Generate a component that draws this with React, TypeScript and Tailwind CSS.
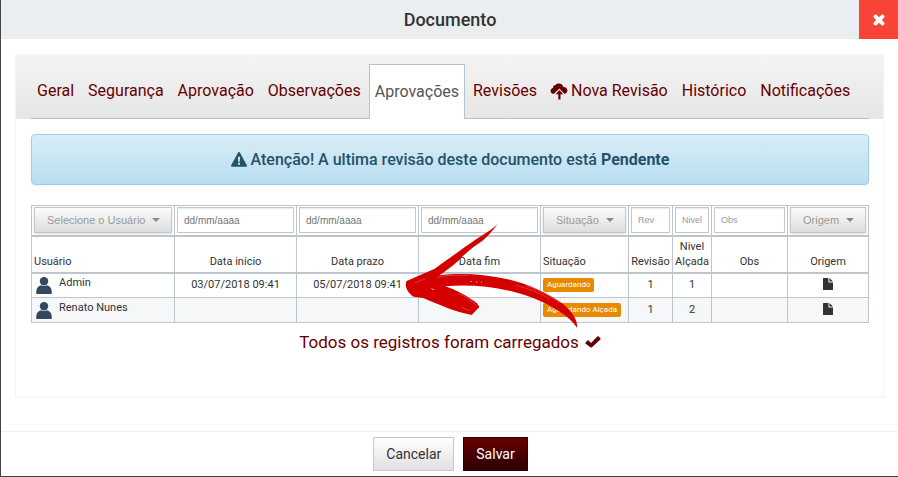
import React from "react";

const font = "font-['Roboto','Liberation_Sans',sans-serif]";

const tabs = [
  { label: "Geral" },
  { label: "Segurança" },
  { label: "Aprovação" },
  { label: "Observações" },
  { label: "Aprovações", active: true },
  { label: "Revisões" },
  { label: "Nova Revisão", upload: true },
  { label: "Histórico" },
  { label: "Notificações" },
];

const rows = [
  { user: "Admin", start: "03/07/2018 09:41", due: "05/07/2018 09:41", status: "Aguardando", rev: "1", level: "1" },
  { user: "Renato Nunes", start: "", due: "", status: "Aguardando Alçada", rev: "1", level: "2" },
];

function CloudUpload() {
  return (
    <svg viewBox="0 0 18 17" className="-ml-px h-[17px] w-[18px]" fill="currentColor" aria-hidden="true">
      <path d="M4 10.800 C1.800 10.800 .6 9.500 .6 7.900 C.6 6.300 1.700 5.200 3.100 5 C2.800 3.300 3.800 2.200 5.200 2.300 C6 1 7.300 .4 8.900 .4 C11.400 .4 13 1.900 13.300 4 C15.600 3.900 17.400 5.400 17.400 7.500 C17.400 9.400 16.100 10.800 14.300 10.800 L9.400 5.400 Z" />
      <path d="M9.400 6.900 L13.200 11.200 H10.500 V16.600 H8.300 V11.200 H5.600 Z" />
    </svg>
  );
}

function Warning() {
  return (
    <svg viewBox="0 0 16 15" className="h-[15px] w-4" fill="currentColor" aria-hidden="true">
      <path fillRule="evenodd" d="M8 0 C8.4 0 8.7 .2 8.9 .5 L15.8 13.2 C16.2 14 15.8 14.8 15 14.8 H1 C.2 14.8 -.2 14 .2 13.2 L7.1 .5 C7.3 .2 7.6 0 8 0 Z M6.9 4.8 L7.2 9.8 H8.8 L9.1 4.8 Z M7 10.8 V12.8 H9 V10.8 Z" />
    </svg>
  );
}

function Cross() {
  return (
    <svg viewBox="0 0 12 12" className="h-3 w-3" stroke="currentColor" strokeWidth="4" strokeLinecap="round" aria-hidden="true">
      <path d="M2.6 2.6 L9.4 9.4 M9.4 2.6 L2.6 9.4" />
    </svg>
  );
}

function Check() {
  return (
    <svg viewBox="0 0 16 12" className="h-3 w-4" fill="currentColor" aria-hidden="true">
      <path d="M.5 6.8 L2.4 4.6 Q3 4 3.7 4.6 L6 6.9 L12.3 .6 Q13 0 13.7 .6 L15.4 2.3 Q15.9 2.9 15.3 3.5 L7 11.3 Q6.2 11.9 5.4 11.3 L.6 7.8 Q.1 7.3 .5 6.8 Z" />
    </svg>
  );
}

function Person() {
  return (
    <svg viewBox="0 0 16 17" className="h-[17px] w-4 shrink-0" fill="#34495e" aria-hidden="true">
      <circle cx="8" cy="4.3" r="4.2" />
      <path d="M.3 17 V14 C.3 11 2.5 8.8 5 8.2 Q8 10 11 8.2 C13.500 8.8 15.700 11 15.700 14 V17 Z" />
    </svg>
  );
}

function FileIcon() {
  return (
    <svg viewBox="0 0 10 12" className="block h-3 w-[10px]" fill="#333" aria-hidden="true">
      <path d="M0 .6 Q0 0 .6 0 H5.400 V4.400 H10 V11.400 Q10 12 9.400 12 H.6 Q0 12 0 11.400 Z M6.400 0 L10 3.500 H6.400 Z" />
    </svg>
  );
}

function FilterSelect({ label }: { label: string }) {
  return (
    <div className="grid items-center">
      <select
        aria-label={label}
        className="col-start-1 row-start-1 h-[26px] w-full appearance-none border border-[#c6c6c6] bg-linear-to-b from-[#fcfcfc] to-[#dedede] pl-3 font-['Liberation_Sans',Arial,sans-serif] text-[11px] text-[#999] shadow-sm"
      >
        <option>{label}</option>
      </select>
      <svg viewBox="0 0 8 4" className="pointer-events-none col-start-1 row-start-1 mr-3 h-1 w-2 justify-self-end" fill="#888" aria-hidden="true">
        <path d="M0 0 H8 L4 4 Z" />
      </svg>
    </div>
  );
}

function FilterInput({ label, name, tone }: { label: string; name: string; tone: string }) {
  return (
    <input
      type="text"
      aria-label={name}
      placeholder={label}
      className={`block h-[26px] w-full border border-[#c6c6c6] bg-white px-[6px] font-['Liberation_Sans',Arial,sans-serif] shadow-[inset_0_1px_1px_rgba(0,0,0,0.08)] ${tone}`}
    />
  );
}

function Arrow() {
  return (
    <svg viewBox="72 36 528 321" className="pointer-events-none absolute top-[17px] left-[373px] h-[107px] w-44" aria-hidden="true">
      <path
        fill="#d40000"
        d="M353 41 C335 60 310 73 285 90 C250 114 212 142 164 176 L80 213 C73 224 80 248 101 260 L130 264 C170 281 210 299 247 308 L275 315 L298 291 L291 280 C266 261 230 240 195 229 C260 223 330 228 400 245 C460 259 510 284 548 311 Q576 330 591 353 C594 328 574 303 548 281 C500 248 440 220 375 206 C310 192 240 188 178 196 C205 177 221 165 238 149 C254 133 270 117 295 101 C318 86 335 66 353 41 Z"
      />
      <g fill="none" stroke="#f0a0a0" strokeWidth="1.500" strokeLinecap="round" opacity="0.7">
        <path d="M172 202 C205 196 230 194 262 197" />
        <path d="M408 226 C440 234 475 247 508 266" />
        <path d="M440 228 C480 242 510 258 538 278" />
        <path d="M236 251 C258 261 276 272 288 285" />
        <path d="M244 291 L268 302 M104 219 L135 207" />
      </g>
      <path d="M152 233 L165 240 L158 240 Z M272 213 h4 v3 h-4 Z M288 214 h4 v3 h-4 Z M303 215 h3 v3 h-3 Z" fill="#f3b0b0" />
    </svg>
  );
}

const cell = "border border-[#bdc6ce] px-[2px]";
const bodyCell = "border border-[#bdc6ce] px-[2px] pb-[2px]";
const dateTone = "text-[10px] placeholder:text-[#757575]";
const textTone = "text-[9px] placeholder:text-[#999]";

export default function App() {
  return (
    <div className={`flex min-h-screen flex-col border-b border-l border-[#444] bg-white text-[#333] ${font}`}>
      <header className="flex h-[39px] items-stretch bg-[#eaeef1]">
        <h1 className="flex flex-1 items-center justify-center pl-10 text-lg font-medium">Documento</h1>
        <button type="button" aria-label="Fechar" className="flex w-[39px] items-center justify-center bg-[#f74436] text-white">
          <Cross />
        </button>
      </header>

      <main className="mx-[14px] mt-[15px] mb-[34px] flex-1 border-x border-b border-[#f4f4f4] shadow-[0_1px_2px_rgba(0,0,0,0.03)]">
        <nav className="bg-linear-to-b from-[#f4f4f4] to-[#e6e6e6] pt-[10px] pr-[14px] pl-[15px]">
          <ul className="flex gap-[2px] border-b border-[#b0c4d4]">
            {tabs.map((t) => (
              <li key={t.label} className="-mb-px">
                <a
                  href="#"
                  className={
                    t.active
                      ? "flex h-[55px] items-center border border-b-0 border-[#b0c4d4] bg-white px-[5px] pb-px text-base whitespace-nowrap text-[#555]"
                      : "flex h-[55px] items-center gap-[3px] border border-transparent px-[5px] pb-px text-base whitespace-nowrap text-[#660000]"
                  }
                >
                  {t.upload && <CloudUpload />}
                  {t.label}
                </a>
              </li>
            ))}
          </ul>
        </nav>

        <div className="pt-[15px] pr-[14px] pl-[15px]">
          <div role="alert" className="flex h-[51px] items-center justify-center gap-1 rounded border border-[#9acfea] bg-linear-to-b from-[#d9edf7] to-[#b9def0] text-base font-medium text-[#245269] shadow-[0_1px_2px_rgba(0,0,0,0.05)]">
            <Warning />
            <p>
              Atenção! A ultima revisão deste documento está <strong className="font-bold">Pendente</strong>
            </p>
          </div>

          <div className="relative mt-5">
            <table className="w-full table-fixed border-collapse text-[11px] leading-[15px]">
              <colgroup>
                <col className="w-[143px]" />
                <col className="w-[122px]" />
                <col className="w-[122px]" />
                <col className="w-[122px]" />
                <col className="w-[88px]" />
                <col className="w-[44px]" />
                <col className="w-[39px]" />
                <col className="w-[76px]" />
                <col className="w-[81px]" />
              </colgroup>
              <thead>
                <tr className="h-[30px]">
                  <td className={cell}><FilterSelect label="Selecione o Usuário" /></td>
                  <td className={cell}><FilterInput label="dd/mm/aaaa" name="Data início" tone={dateTone} /></td>
                  <td className={cell}><FilterInput label="dd/mm/aaaa" name="Data prazo" tone={dateTone} /></td>
                  <td className={cell}><FilterInput label="dd/mm/aaaa" name="Data fim" tone={dateTone} /></td>
                  <td className={cell}><FilterSelect label="Situação" /></td>
                  <td className={cell}><FilterInput label="Rev" name="Revisão" tone={textTone} /></td>
                  <td className={cell}><FilterInput label="Nivel" name="Nivel Alçada" tone={textTone} /></td>
                  <td className={cell}><FilterInput label="Obs" name="Obs" tone={textTone} /></td>
                  <td className={cell}><FilterSelect label="Origem" /></td>
                </tr>
                <tr className="h-[37px] border-y-2 border-[#bdc6ce] align-bottom">
                  {["Usuário", "Data início", "Data prazo", "Data fim", "Situação", "Revisão", "Nivel Alçada", "Obs", "Origem"].map((h) => (
                    <th
                      key={h}
                      scope="col"
                      className={
                        h === "Usuário" || h === "Situação"
                          ? "border-x border-[#bdc6ce] px-[2px] pb-[3px] text-left font-normal"
                          : "border-x border-[#bdc6ce] px-0 pb-[3px] text-center font-normal"
                      }
                    >
                      {h}
                    </th>
                  ))}
                </tr>
              </thead>
              <tbody>
                {rows.map((r) => (
                  <tr key={r.user} className="h-[25px] text-center even:bg-[#f5f7f9]">
                    <td className={bodyCell}>
                      <div className="flex items-end gap-[7px] pl-[2px]">
                        <Person />
                        <span className="pb-1">{r.user}</span>
                      </div>
                    </td>
                    <td className={bodyCell}>{r.start}</td>
                    <td className={bodyCell}>{r.due}</td>
                    <td className={bodyCell}></td>
                    <td className={`${cell} text-left`}>
                      <div className="flex">
                        <span className="rounded-xs bg-[#e88a00] px-1 text-[8px] leading-[14px] whitespace-nowrap text-white">{r.status}</span>
                      </div>
                    </td>
                    <td className={bodyCell}>{r.rev}</td>
                    <td className={bodyCell}>{r.level}</td>
                    <td className={bodyCell}></td>
                    <td className={bodyCell}>
                      <div className="flex justify-center"><FileIcon /></div>
                    </td>
                  </tr>
                ))}
              </tbody>
            </table>
            <Arrow />
          </div>

          <p className="mt-[7px] flex items-center justify-center gap-[6px] text-[17px] leading-6 text-[#660000]">
            Todos os registros foram carregados <Check />
          </p>
        </div>
      </main>

      <footer className="flex items-start justify-center gap-[9px] border-t border-[#f0f0f0] pt-[5px] pb-[5px] pl-[2px] text-sm">
        <button type="button" className="h-[34px] border border-[#c8c8c8] bg-linear-to-b from-white to-[#e0e0e0] px-3 text-[#333]">
          Cancelar
        </button>
        <button type="button" className="h-[34px] border border-[#2b0000] bg-linear-to-b from-[#660000] to-[#2e0000] px-3 text-white">
          Salvar
        </button>
      </footer>
    </div>
  );
}
